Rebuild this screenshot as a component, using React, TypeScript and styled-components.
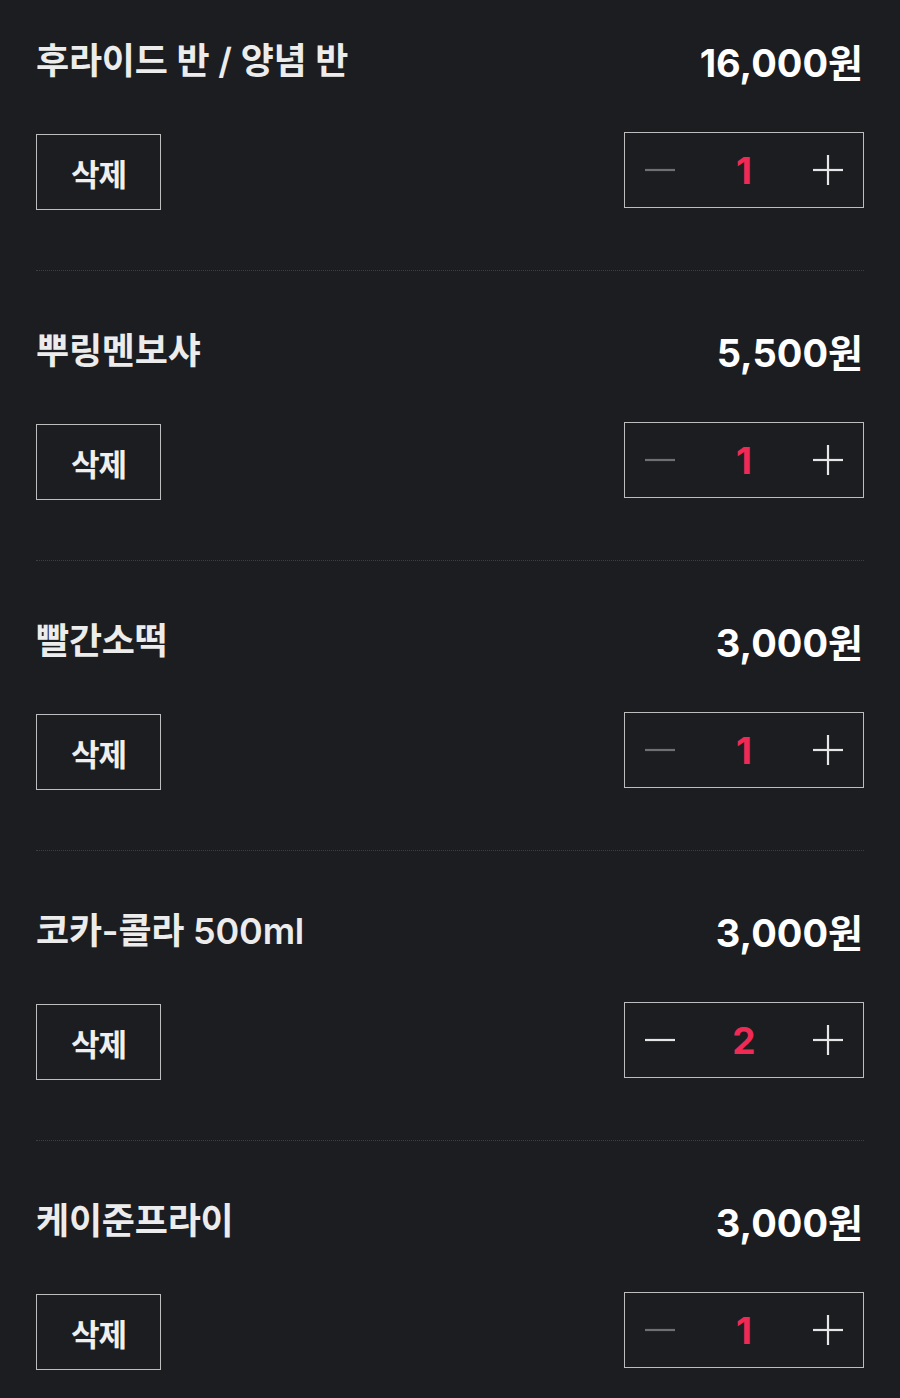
import React from "react";
import styled, { createGlobalStyle } from "styled-components";

const Global = createGlobalStyle`
  html, body { margin: 0; padding: 0; background: #1c1d21; }
  body { font-family: Inter, "Noto Sans CJK KR", sans-serif; -webkit-font-smoothing: antialiased; }
  * { box-sizing: border-box; }
`;

const List = styled.div`
  background: #1c1d21;
  min-height: 1398px;
  padding: 0 36px;
`;

const Item = styled.div`
  padding: 55px 0 60px;
  border-bottom: 1px dotted #3d3e43;
  &:first-child { padding-top: 36px; }
  &:last-child { border-bottom: none; }
`;

const TopRow = styled.div`
  display: flex;
  justify-content: space-between;
  align-items: center;
  height: 48px;
  margin-bottom: 48px;
`;

const Title = styled.div`
  font-family: Inter, "Noto Sans CJK KR", sans-serif;
  font-size: 36px;
  font-weight: 600;
  color: #ececec;
  letter-spacing: -0.2px;
  line-height: 48px;
  padding-top: 2px;
`;

const Price = styled.div`
  font-family: Inter, "Noto Sans CJK KR", sans-serif;
  font-size: 38px;
  font-weight: 700;
  color: #ffffff;
  letter-spacing: 0;
  line-height: 48px;
  padding-top: 6px;
  margin-right: 1px;
`;

const BottomRow = styled.div`
  display: flex;
  justify-content: space-between;
  align-items: flex-start;
`;

const DeleteButton = styled.button`
  margin-top: 2px;
  width: 125px;
  height: 76px;
  background: transparent;
  border: 1px solid #bdbdbd;
  color: #efefef;
  font-family: "Noto Sans CJK KR", sans-serif;
  font-size: 31px;
  font-weight: 700;
  letter-spacing: -1px;
  padding: 0;
  display: flex;
  align-items: center;
  justify-content: center;
`;

const Stepper = styled.div`
  width: 240px;
  height: 76px;
  border: 1px solid #bdbdbd;
  display: flex;
  align-items: center;
  justify-content: space-between;
  padding: 0 20px;
`;

const StepButton = styled.button<{ $dim?: boolean }>`
  background: transparent;
  border: none;
  padding: 0;
  width: 30px;
  height: 30px;
  display: flex;
  align-items: center;
  justify-content: center;
  color: ${(p) => (p.$dim ? "#6e6f73" : "#e6e6e6")};
`;

const Qty = styled.div`
  font-family: Inter, sans-serif;
  font-size: 37px;
  font-weight: 700;
  color: #f02a55;
  line-height: 1;
`;

const MinusIcon = () => (
  <svg width="30" height="30" viewBox="0 0 30 30">
    <line x1="0" y1="15" x2="30" y2="15" stroke="currentColor" strokeWidth="2.2" />
  </svg>
);

const PlusIcon = () => (
  <svg width="30" height="30" viewBox="0 0 30 30">
    <line x1="0" y1="15" x2="30" y2="15" stroke="currentColor" strokeWidth="2.2" />
    <line x1="15" y1="0" x2="15" y2="30" stroke="currentColor" strokeWidth="2.2" />
  </svg>
);

const items = [
  { name: "후라이드 반 / 양념 반", price: "16,000원", qty: 1 },
  { name: "뿌링멘보샤", price: "5,500원", qty: 1 },
  { name: "빨간소떡", price: "3,000원", qty: 1 },
  { name: "코카-콜라 500ml", price: "3,000원", qty: 2 },
  { name: "케이준프라이", price: "3,000원", qty: 1 },
];

export default function App() {
  return (
    <>
      <Global />
      <List>
        {items.map((it) => (
          <Item key={it.name}>
            <TopRow>
              <Title>{it.name}</Title>
              <Price>{it.price}</Price>
            </TopRow>
            <BottomRow>
              <DeleteButton>삭제</DeleteButton>
              <Stepper>
                <StepButton $dim={it.qty <= 1}>
                  <MinusIcon />
                </StepButton>
                <Qty>{it.qty}</Qty>
                <StepButton>
                  <PlusIcon />
                </StepButton>
              </Stepper>
            </BottomRow>
          </Item>
        ))}
      </List>
    </>
  );
}
